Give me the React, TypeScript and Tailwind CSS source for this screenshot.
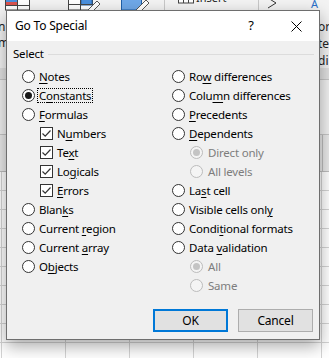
import React from "react";

const FONT = { fontFamily: '"Segoe UI", "Noto Sans", "Open Sans", sans-serif' };

function Radio({ checked = false, disabled = false }: { checked?: boolean; disabled?: boolean }) {
  return (
    <span
      className={`w-[13px] h-[13px] shrink-0 rounded-full border flex items-center justify-center ${
        disabled ? "border-[#bcbcbc] bg-[#f4f4f4]" : "border-[#333333] bg-white"
      }`}
    >
      {checked && (
        <span className={`w-[7px] h-[7px] rounded-full ${disabled ? "bg-[#c4c4c4]" : "bg-[#1a1a1a]"}`} />
      )}
    </span>
  );
}

function Check() {
  return (
    <span className="w-[13px] h-[13px] shrink-0 border border-[#333333] bg-white flex items-center justify-center">
      <svg width="11" height="11" viewBox="0 0 11 11">
        <path d="M1.5 5.5 L4.2 8.2 L9.5 2.5" fill="none" stroke="#333333" strokeWidth="1.2" />
      </svg>
    </span>
  );
}

type Item = {
  kind: "radio" | "check" | "subradio";
  pre: string;
  u?: string;
  post?: string;
  checked?: boolean;
  focus?: boolean;
};

function Label({ it, disabled }: { it: Item; disabled?: boolean }) {
  return (
    <span
      className={`leading-none whitespace-nowrap ${disabled ? "text-[#7d7d7d]" : "text-black"} ${
        it.focus ? "outline outline-1 outline-dotted outline-black px-[1px] py-[1px] -ml-[1px]" : ""
      }`}
    >
      {it.pre}
      {it.u && <u className="underline-offset-[2px]">{it.u}</u>}
      {it.post}
    </span>
  );
}

function Row({ it }: { it: Item }) {
  if (it.kind === "check") {
    return (
      <div className="h-[19px] flex items-center gap-[4px] pl-[18px]">
        <Check />
        <Label it={it} />
      </div>
    );
  }
  if (it.kind === "subradio") {
    return (
      <div className="h-[19px] flex items-center gap-[5px] pl-[18px]">
        <Radio checked={it.checked} disabled />
        <Label it={it} disabled />
      </div>
    );
  }
  return (
    <div className="h-[19px] flex items-center gap-[4px]">
      <Radio checked={it.checked} />
      <Label it={it} />
    </div>
  );
}

const left: Item[] = [
  { kind: "radio", pre: "", u: "N", post: "otes" },
  { kind: "radio", pre: "C", u: "o", post: "nstants", checked: true, focus: true },
  { kind: "radio", pre: "", u: "F", post: "ormulas" },
  { kind: "check", pre: "N", u: "u", post: "mbers" },
  { kind: "check", pre: "Te", u: "x", post: "t" },
  { kind: "check", pre: "Lo", u: "g", post: "icals" },
  { kind: "check", pre: "", u: "E", post: "rrors" },
  { kind: "radio", pre: "Blan", u: "k", post: "s" },
  { kind: "radio", pre: "Current ", u: "r", post: "egion" },
  { kind: "radio", pre: "Current ", u: "a", post: "rray" },
  { kind: "radio", pre: "O", u: "b", post: "jects" },
];

const right: Item[] = [
  { kind: "radio", pre: "Ro", u: "w", post: " differences" },
  { kind: "radio", pre: "Colu", u: "m", post: "n differences" },
  { kind: "radio", pre: "", u: "P", post: "recedents" },
  { kind: "radio", pre: "", u: "D", post: "ependents" },
  { kind: "subradio", pre: "Direct only", checked: true },
  { kind: "subradio", pre: "All levels" },
  { kind: "radio", pre: "La", u: "s", post: "t cell" },
  { kind: "radio", pre: "Visible cells onl", u: "y" },
  { kind: "radio", pre: "Condi", u: "t", post: "ional formats" },
  { kind: "radio", pre: "Data ", u: "v", post: "alidation" },
  { kind: "subradio", pre: "All", checked: true },
  { kind: "subradio", pre: "Same" },
];

function RibbonIcons() {
  return (
    <svg width="329" height="11" viewBox="0 0 329 11" className="block">
      <rect x="5.5" y="-6" width="24" height="16" fill="#fff" stroke="#444" />
      <rect x="6" y="-6" width="11" height="8" fill="#4a8fdc" />
      <rect x="6" y="2" width="11" height="3" fill="#d9534f" />
      <line x1="17.5" y1="-6" x2="17.5" y2="10" stroke="#444" />
      <line x1="5.5" y1="5.5" x2="29.5" y2="5.5" stroke="#444" />
      <rect x="68.5" y="-6" width="24" height="16" fill="#fff" stroke="#444" />
      <rect x="81" y="-6" width="11" height="11" fill="#4a8fdc" stroke="#1f5fa8" />
      <line x1="80.5" y1="-6" x2="80.5" y2="10" stroke="#444" />
      <line x1="68.5" y1="4.5" x2="92.5" y2="4.5" stroke="#444" />
      <path d="M88 10 L97 1 L100 4 L91 13 Z" fill="#fff" stroke="#555" />
      <rect x="121.5" y="-6" width="20" height="16" fill="#6fa8e8" stroke="#1f5fa8" />
      <path d="M136 10 L146 0 L149 3 L139 13 Z" fill="#fff" stroke="#555" />
      <line x1="164.5" y1="0" x2="164.5" y2="11" stroke="#c8c8c8" />
      <rect x="178.5" y="-3" width="15" height="6" fill="#fff" stroke="#444" />
      <line x1="183.5" y1="-3" x2="183.5" y2="3" stroke="#444" />
      <line x1="188.5" y1="-3" x2="188.5" y2="3" stroke="#444" />
      <text x="196" y="2" fontSize="11" fill="#222" style={FONT}>Insert</text>
      <line x1="258.5" y1="0" x2="258.5" y2="11" stroke="#c8c8c8" />
      <path d="M268 -2 L276 3 L268 8" fill="none" stroke="#333" />
      <text x="311" y="8" fontSize="11" fill="#2b6fc9" style={FONT}>A</text>
    </svg>
  );
}

export default function App() {
  const cols = [2, 64, 64, 64, 64, 64, 64];
  const rows = Array.from({ length: 10 });
  return (
    <div className="relative w-[329px] h-[358px] overflow-hidden bg-white" style={FONT}>
      <div className="flex flex-col w-[329px]">
        <div className="h-[68px] bg-[#f3f3f3] flex flex-col">
          <RibbonIcons />
          <div className="flex justify-between text-[12px] text-[#222] leading-none mt-[10px]">
            <div className="-ml-[2px] flex flex-col gap-[4px]">
              <span>n</span>
              <span>m</span>
            </div>
            <div className="flex flex-col gap-[5px] w-[11px] overflow-hidden">
              <span>ort</span>
              <span>te</span>
              <span>di</span>
            </div>
          </div>
        </div>
        <div className="h-[12px] bg-[#e1e1e1] border-b border-[#c6c6c6]" />
        <div className="h-[55px] bg-[#f0f0f0] border-b border-[#c6c6c6]" />
        <div className="h-[37px] bg-[#e9e9e9] border-b border-[#bdbdbd] flex">
          <div className="w-[323px] border-r border-[#bdbdbd]" />
        </div>
        {rows.map((_, r) => (
          <div key={r} className="h-[19px] flex">
            {cols.map((w, c) => (
              <div
                key={c}
                className="h-[19px] shrink-0 border-r border-b border-[#d4d4d4]"
                style={{ width: w }}
              />
            ))}
          </div>
        ))}
      </div>

      <div className="absolute left-[6px] top-[10px] w-[314px] h-[330px] border border-[#6e6e6e] bg-[#f0f0f0] flex flex-col shadow-[0_6px_16px_rgba(0,0,0,0.35)]">
        <div className="h-[30px] bg-white flex items-center shrink-0">
          <span className="pl-[8px] text-[12px] tracking-[-0.2px] text-black flex-1">Go To Special</span>
          <span className="w-[46px] h-[30px] flex items-center justify-center text-[13px] text-black">?</span>
          <span className="w-[45px] h-[30px] flex items-center justify-center">
            <svg width="11" height="11" viewBox="0 0 11 11">
              <path d="M0.5 0.5 L10.5 10.5 M10.5 0.5 L0.5 10.5" stroke="#000" strokeWidth="1" />
            </svg>
          </span>
        </div>
        <div className="flex-1 flex flex-col text-[11.5px] tracking-[-0.2px]">
          <div className="h-[16px] mt-[5px] pl-[6px] pr-[5px] flex items-center gap-[4px]">
            <span className="leading-none text-black">Select</span>
            <div className="flex-1 h-px bg-[#dcdcdc]" />
          </div>
          <div className="mt-[5px] pl-[15px] flex">
            <div className="w-[150px] flex flex-col">
              {left.map((it, i) => (
                <Row key={i} it={it} />
              ))}
            </div>
            <div className="flex flex-col">
              {right.map((it, i) => (
                <Row key={i} it={it} />
              ))}
            </div>
          </div>
          <div className="mt-auto mb-[7px] pr-[6px] flex justify-end gap-[10px]">
            <button className="w-[75px] h-[23px] border-2 border-[#0078d7] bg-[#e1e1e1] text-[12px] text-black leading-none">
              OK
            </button>
            <button className="w-[75px] h-[23px] border border-[#adadad] bg-[#e1e1e1] text-[12px] text-black leading-none">
              Cancel
            </button>
          </div>
        </div>
      </div>
    </div>
  );
}
